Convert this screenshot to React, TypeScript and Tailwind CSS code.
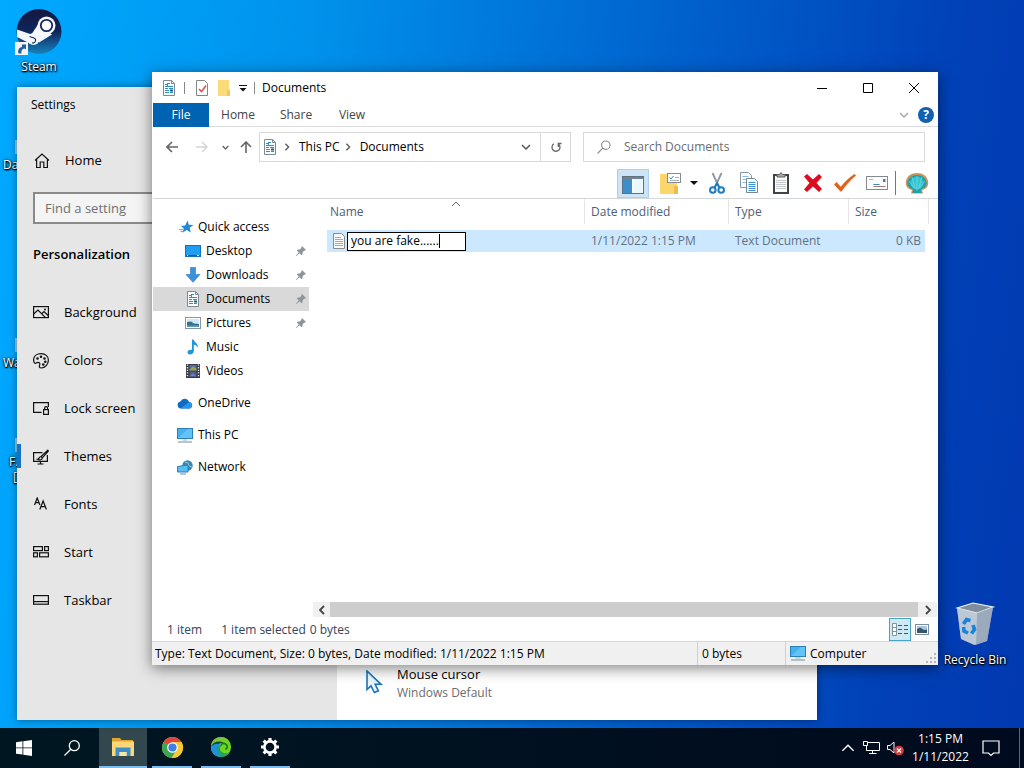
import type { ReactNode } from "react";

const DocIcon = ({ className = "" }: { className?: string }) => (
  <svg viewBox="0 0 14 16" className={`h-4 w-3.5 shrink-0 ${className}`} aria-hidden="true">
    <path d="M1.5.5h8l3 3v12h-11z" fill="#fafdff" stroke="#7d8a93" />
    <path d="M9.500.5v3h3" fill="none" stroke="#7d8a93" />
    <path d="M3 4.500h2M6 3.500h2M3 6.500h8M3 8.500h3M7 8.500h4M3 10.500h4M3 12.500h4M8 12.500h3" stroke="#2f8fcb" />
    <path d="M8 10.500h3" stroke="#1d5f77" strokeWidth="2" />
    <path d="M5.500 3v4" stroke="#2f8fcb" />
  </svg>
);

const PinIcon = () => (
  <svg viewBox="0 0 10 10" className="size-2.5 shrink-0" aria-hidden="true">
    <path d="M6 0l4 4-1 .8-.7-.3-1.800 2 .1 1.800-1 .9-2-2L.4 10 0 9.600l2.800-3.200-2-2 .9-1 1.900.1 2-1.800L5.200.9z" fill="#8c959c" />
  </svg>
);

const Monitor = () => (
  <svg viewBox="0 0 16 15" className="h-[15px] w-4 shrink-0" aria-hidden="true">
    <rect x=".5" y=".5" width="15" height="10" fill="#45b0ee" stroke="#2b7fb5" />
    <path d="M1 10L11 1h4v9z" fill="#64c3f6" />
    <path d="M5.500 12h5" stroke="#9fb4c2" />
    <path d="M1 14h14" stroke="#6f8ea3" />
  </svg>
);

const PictureIcon = () => (
  <svg viewBox="0 0 16 12" className="h-3 w-4 shrink-0" aria-hidden="true">
    <rect x=".5" y=".5" width="15" height="11" fill="#fff" stroke="#8a97a0" />
    <rect x="2" y="2" width="12" height="8" fill="#cfe8f5" />
    <path d="M2 5l4-.5 3 2 5 .5v3H2z" fill="#3c6e87" />
    <path d="M2 8.500h12V10H2z" fill="#5d9fc4" />
  </svg>
);

const Chevron = ({ d, size, color, w = "1.300" }: { d: string; size: string; color: string; w?: string }) => (
  <svg viewBox="0 0 10 10" className={`${size} shrink-0`} fill="none" stroke={color} strokeWidth={w} aria-hidden="true">
    <path d={d} />
  </svg>
);

const DOWN = "M1 3l4 4 4-4";
const RIGHT = "M3 1l4 4-4 4";
const LEFT = "M7 1L3 5l4 4";
const UP = "M1 7l4-4 4 4";

/* ---------- Settings window ---------- */

const line = { fill: "none", stroke: "#111", strokeWidth: 1.2 };

const settingsItems: { label: string; icon: ReactNode }[] = [
  {
    label: "Background",
    icon: (
      <>
        <rect x=".6" y="1.600" width="14.800" height="11" />
        <path d="M.6 9l4.400-4 7.500 7.600M9 8.500l2-2 4.400 4.300" />
        <circle cx="12" cy="4.500" r=".4" />
      </>
    ),
  },
  {
    label: "Colors",
    icon: (
      <>
        <path d="M.6 6.500C.8 2.900 4 .6 8.200.6c4 0 7.200 2.600 7.200 6.300 0 4.500-3.200 8.100-7.200 8.100-1.600 0-2.400-1.300-1.600-2.700.8-1.400 0-2.900-1.600-2.900-1.600 0-1.700.9-2.900.9C1.100 10.300.6 8.100.6 6.500z" />
        <circle cx="4.500" cy="5.500" r=".7" />
        <circle cx="8" cy="3.800" r=".7" />
        <circle cx="11.500" cy="5.500" r=".7" />
        <circle cx="12.300" cy="8.800" r=".7" />
        <circle cx="10.300" cy="11.500" r=".7" />
      </>
    ),
  },
  {
    label: "Lock screen",
    icon: (
      <>
        <path d="M15.400 6V1.600H.6v9.800h8" />
        <rect x="10.600" y="8.600" width="4.800" height="4.800" />
        <path d="M11.600 8.500V7.200a1.500 1.500 0 013 0v1.300" />
      </>
    ),
  },
  {
    label: "Themes",
    icon: (
      <>
        <path d="M9.500 3.600H.6v8.800h13.800V6M7.500 12.400V15M4.500 15h6" />
        <path d="M14.800 1.200L8 7.500l1.300 1.400 6-6.800zM8 7.500c-2 0-1.500 2.500-3.500 2.800 2 1 4.800.6 4.800-1.400" />
      </>
    ),
  },
  {
    label: "Fonts",
    icon: <path d="M1.500 8l2.700-7 2.700 7M2.500 5.700h3.600M6.800 12.500l3.300-8.500 3.300 8.500M8 9.700h4.300" />,
  },
  {
    label: "Start",
    icon: (
      <>
        <rect x=".6" y="1.600" width="8.800" height="4" />
        <rect x="11.600" y="1.600" width="3.800" height="4" />
        <rect x=".6" y="7.800" width="3.800" height="4" />
        <rect x="6.600" y="7.800" width="8.800" height="4" />
      </>
    ),
  },
  {
    label: "Taskbar",
    icon: (
      <>
        <rect x=".6" y="2.600" width="14.800" height="8.600" />
        <path d="M.6 8.600h14.800" />
      </>
    ),
  },
];

function SettingsWindow() {
  return (
    <section
      aria-label="Settings"
      className="absolute top-[87px] bottom-2 left-[17px] flex w-[800px] bg-white shadow-[0_0_8px_rgba(0,0,0,0.4)]"
    >
      <div className="flex w-80 flex-col bg-[#e6e6e6] text-[13px] text-black">
        <h2 className="px-3.5 pt-2 text-xs leading-5">Settings</h2>
        <a href="#home" className="mt-[22px] flex h-12 items-center gap-[15px] pl-[17px]">
          <svg viewBox="0 0 16 16" className="size-4" {...line} aria-hidden="true">
            <path d="M1 7.500l7-6.500 7 6.500M2.600 6.200v8.300h3.600V9h3.600v5.500h3.600V6.200" />
          </svg>
          Home
        </a>
        <input
          aria-label="Find a setting"
          placeholder="Find a setting"
          className="mx-4 mt-[7px] h-8 border-2 border-[#8a8a8a] bg-[#f4f4f4] px-2.5 placeholder:text-[#717171]"
        />
        <h3 className="mt-5 pl-4 text-[13px] leading-5 font-semibold">Personalization</h3>
        <nav className="mt-[25px] flex flex-col">
          {settingsItems.map((i) => (
            <a key={i.label} href={`#${i.label}`} className="flex h-12 items-center gap-[15px] pl-4">
              <svg viewBox="0 0 16 16" className="size-4 shrink-0" {...line} aria-hidden="true">
                {i.icon}
              </svg>
              {i.label}
            </a>
          ))}
        </nav>
      </div>
      <div className="flex flex-1 items-end px-7 pb-[18px]">
        <svg viewBox="0 0 18 24" className="mb-2 h-6 w-[18px]" aria-hidden="true">
          <path d="M2 1v18.500l4-3.700 3.400 6.700 4-1.700-3.200-6.500h5.800z" fill="#eaf6ff" stroke="#1b74bb" strokeWidth="1.600" />
        </svg>
        <div className="ml-3.5">
          <p className="text-[13px] leading-5 text-black">Mouse cursor</p>
          <p className="text-xs leading-[18px] text-[#6d6d6d]">Windows Default</p>
        </div>
      </div>
    </section>
  );
}

/* ---------- Explorer window ---------- */

const quickItems: { label: string; pinned?: boolean; active?: boolean; icon: ReactNode }[] = [
  {
    label: "Desktop",
    pinned: true,
    icon: (
      <svg viewBox="0 0 16 12" className="h-3 w-4" aria-hidden="true">
        <rect x=".5" y=".5" width="15" height="11" fill="#1e9df1" stroke="#1474b8" />
        <path d="M1 10.500h14" stroke="#0b5c98" />
        <path d="M2 10.500h1M12 10.500h2" stroke="#fff" />
      </svg>
    ),
  },
  {
    label: "Downloads",
    pinned: true,
    icon: (
      <svg viewBox="0 0 16 16" className="size-4" aria-hidden="true">
        <path d="M5.500.5h5v7h4.500L8 15.300 1 7.500h4.500z" fill="#3b91dc" stroke="#2a78bf" strokeWidth=".6" />
      </svg>
    ),
  },
  { label: "Documents", pinned: true, active: true, icon: <DocIcon /> },
  { label: "Pictures", pinned: true, icon: <PictureIcon /> },
  {
    label: "Music",
    icon: (
      <svg viewBox="0 0 16 16" className="size-4" aria-hidden="true">
        <path d="M7 .5h1.500c.5 2.500 4.800 3.300 4.300 8.500-.6-2-2-3-4-3.300v6.600c0 2-1.800 3.200-3.700 3.200S2.500 14.500 2.500 13 4 10.400 7 10.700z" fill="#1e96dc" />
      </svg>
    ),
  },
  {
    label: "Videos",
    icon: (
      <svg viewBox="0 0 16 16" className="size-4" aria-hidden="true">
        <rect x="1" y="1" width="14" height="14" fill="#39393f" />
        <path d="M2.500 1.500v13M13.500 1.500v13" stroke="#e6e6e6" strokeWidth="1.400" strokeDasharray="1.300 1.300" />
        <rect x="4.500" y="2" width="7" height="5.500" fill="#5a6ea6" />
        <rect x="4.500" y="8.500" width="7" height="5.500" fill="#4a5c90" />
        <path d="M4.500 6.500l3.500-3 3.500 2v2h-7z" fill="#93a746" />
        <path d="M5 13l3-3 3 3z" fill="#7b76b8" />
      </svg>
    ),
  },
];

const rootItems: { label: string; icon: ReactNode }[] = [
  {
    label: "OneDrive",
    icon: (
      <svg viewBox="0 0 16 11" className="h-[11px] w-4" aria-hidden="true">
        <path d="M4 10.500a3.600 3.600 0 01-.6-7.100A4.600 4.600 0 0112 3.900a3.400 3.400 0 01.9 6.600z" fill="#0f6cc4" />
        <path d="M3.500 10.500L12 4.200a3.300 3.300 0 011 6.300z" fill="#2795ea" />
      </svg>
    ),
  },
  { label: "This PC", icon: <Monitor /> },
  {
    label: "Network",
    icon: (
      <svg viewBox="0 0 16 15" className="h-[15px] w-4" aria-hidden="true">
        <circle cx="10.500" cy="5.500" r="5.200" fill="#3f86ad" />
        <path d="M8 2l3 1 1 3 3 1" stroke="#8cc7e4" fill="none" />
        <path d="M.5 6.500l10.500-1.500v7H.5z" fill="#58bdf0" stroke="#2b7fb5" />
        <path d="M3 14h6" stroke="#6f8ea3" />
      </svg>
    ),
  },
];

const tools: { label: string; icon: ReactNode }[] = [
  {
    label: "Cut",
    icon: (
      <>
        <path d="M7.500 2l6 13M16.500 2l-6 13" stroke="#8d979f" strokeWidth="1.800" />
        <circle cx="7.800" cy="19" r="2.800" fill="none" stroke="#1b7cc4" strokeWidth="2" />
        <circle cx="16.200" cy="19" r="2.800" fill="none" stroke="#1b7cc4" strokeWidth="2" />
        <path d="M9.500 16.500l2.500-4 2.500 4" fill="none" stroke="#1b7cc4" strokeWidth="2" />
      </>
    ),
  },
  {
    label: "Copy",
    icon: (
      <>
        <path d="M3.500 1.500h8l3 3v12h-11z" fill="#fff" stroke="#8297a8" />
        <path d="M5.500 5.500h6M5.500 8.500h6M5.500 11.500h6" stroke="#88b9df" />
        <path d="M9.500 7.500h8l3 3v11h-11z" fill="#fff" stroke="#71889a" />
        <path d="M11.500 11.500h7M11.500 13.500h7M11.500 15.500h7M11.500 17.500h7M11.500 19.500h7" stroke="#3f94d3" />
      </>
    ),
  },
  {
    label: "Paste",
    icon: (
      <>
        <rect x="5" y="4" width="14" height="18" fill="#fafafa" stroke="#404449" strokeWidth="2" />
        <path d="M8 6V3.500h2.500l1.500-2 1.500 2H16V6z" fill="#a7abae" stroke="#5a5e62" />
        <path d="M7 9.500h10M7 11.500h10M7 13.500h10M7 15.500h10M7 17.500h10" stroke="#c5c9cd" />
      </>
    ),
  },
  {
    label: "Delete",
    icon: <path d="M3 5.500L6 3l6 5.500L18 3l3 3-5.500 6 5.500 6-3 3-6-5.500L6 21l-3-2.500L8.500 12z" fill="#dd0a20" />,
  },
  {
    label: "Properties",
    icon: <path d="M1 13.500L3.500 11l4.300 4.700C12 10.500 16 6.500 21.500 3l1.500 1.500C17 9.500 12.500 14.500 8.500 20.500H7.500z" fill="#e2611b" />,
  },
  {
    label: "Rename",
    icon: (
      <>
        <rect x="1.500" y="5.500" width="21" height="13" fill="#fbfcfd" stroke="#83898e" />
        <rect x="18" y="8" width="2.500" height="3" fill="#4f78c7" />
        <path d="M4 8.500h4" stroke="#b5bbc0" />
        <path d="M8.500 13.500h6" stroke="#4b82b0" />
        <path d="M8.500 15.500h12" stroke="#a07980" />
      </>
    ),
  },
];

function Sidebar() {
  return (
    <nav className="flex w-[160px] shrink-0 flex-col pt-4 text-black">
      <a href="#quick" className="flex h-6 items-center gap-1 pl-[25px]">
        <svg viewBox="0 0 16 16" className="size-4" aria-hidden="true">
          <path d="M9.500 1.500l1.300 4.200 4.700.3-3.800 2.800 1 4.700-4-2.500-4.200 2.800 1.300-4.300-2.800-2.500 4.200-.6z" fill="#2588d6" />
          <path d="M1 10.500h4M2.500 12.500h3" stroke="#5fb0ea" />
        </svg>
        Quick access
      </a>
      {quickItems.map((i) => (
        <a
          key={i.label}
          href={`#${i.label}`}
          className={`mr-1 flex h-6 items-center gap-[5px] pr-[3px] pl-8 ${i.active ? "bg-[#d9d9d9]" : ""}`}
        >
          <span className="flex w-4 justify-center">{i.icon}</span>
          <span className="flex-1">{i.label}</span>
          {i.pinned && <PinIcon />}
        </a>
      ))}
      {rootItems.map((i) => (
        <a key={i.label} href={`#${i.label}`} className="mt-2 flex h-6 items-center gap-[5px] pl-6">
          {i.icon}
          {i.label}
        </a>
      ))}
    </nav>
  );
}

function FileTable() {
  const th = "relative h-[25px] border-r border-[#e5e5e5] p-0 text-left font-normal text-[#4c607a]";
  return (
    <table className="mr-[9px] ml-[14px] table-fixed border-separate border-spacing-0">
      <colgroup>
        <col />
        <col className="w-36" />
        <col className="w-[120px]" />
        <col className="w-20" />
      </colgroup>
      <thead>
        <tr>
          <th className={`${th} pl-[3px]`}>
            Name
            <span className="absolute inset-x-0 top-0 flex justify-center">
              <Chevron d={UP} size="size-2.5" color="#666" w="1" />
            </span>
          </th>
          <th className={`${th} pl-1.5`}>Date modified</th>
          <th className={`${th} pl-1.5`}>Type</th>
          <th className={`${th} pl-1.5`}>Size</th>
        </tr>
        <tr aria-hidden="true">
          <td className="h-1.5" colSpan={4} />
        </tr>
      </thead>
      <tbody>
        <tr className="h-[22px] text-[#5f7285]">
          <td className="bg-[#cce8ff] p-0 pl-[5px]">
            <div className="flex items-center gap-px">
              <svg viewBox="0 0 14 16" className="h-4 w-3.5" aria-hidden="true">
                <path d="M1.500.5h8l3 3v12h-11z" fill="#fafafa" stroke="#8c8c8c" />
                <path d="M3 4.500h6M3 6.500h8M3 8.500h8M3 10.500h8M3 12.500h8" stroke="#a8a8a8" />
              </svg>
              <label className="flex h-[19px] w-[119px] items-center border border-black bg-white pl-[3px] text-black">
                <input
                  aria-label="File name"
                  defaultValue="you are fake......"
                  className="[field-sizing:content] bg-transparent outline-none"
                />
                <span className="h-3.5 w-px bg-black" />
              </label>
            </div>
          </td>
          <td className="bg-[#cce8ff] p-0 pl-1.5">1/11/2022 1:15 PM</td>
          <td className="bg-[#cce8ff] p-0 pl-1.5">Text Document</td>
          <td className="border-r-4 border-white bg-[#cce8ff] p-0 pr-1 text-right">0 KB</td>
        </tr>
      </tbody>
    </table>
  );
}

function ExplorerWindow() {
  return (
    <section
      aria-label="Documents"
      className="absolute top-[72px] right-[86px] bottom-[63px] left-[152px] flex flex-col bg-white pl-px text-xs shadow-[0_3px_14px_rgba(0,0,0,0.5)]"
    >
      <header className="flex h-[31px] shrink-0 items-center text-black">
        <DocIcon className="ml-[9px]" />
        <span className="ml-2 h-3 w-px bg-[#888]" />
        <button aria-label="Properties" className="ml-2.5">
          <svg viewBox="0 0 14 16" className="h-4 w-3.5" aria-hidden="true">
            <path d="M1.500.5h8l3 3v12h-11z" fill="#fff" stroke="#858585" />
            <path d="M4 9l2.500 2.500L11 5.500" fill="none" stroke="#e0504a" strokeWidth="1.500" />
          </svg>
        </button>
        <button aria-label="New folder" className="ml-2">
          <svg viewBox="0 0 14 16" className="h-4 w-3.5" aria-hidden="true">
            <path d="M1 0h11v10l1 1v5H1z" fill="#fbdb78" />
            <path d="M10 10h3v6h-3z" fill="#efc75c" />
          </svg>
        </button>
        <button aria-label="Customize Quick Access Toolbar" className="ml-2">
          <svg viewBox="0 0 8 8" className="size-2" aria-hidden="true">
            <path d="M0 1.500h8" stroke="#111" />
            <path d="M.5 4h7L4 7.500z" fill="#111" />
          </svg>
        </button>
        <span className="ml-[7px] h-3 w-px bg-[#888]" />
        <h1 className="ml-[7px] flex-1">Documents</h1>
        <button aria-label="Minimize" className="flex h-full w-[46px] items-center justify-center">
          <svg viewBox="0 0 10 10" className="size-2.5" stroke="#000"><path d="M0 5.500h10" /></svg>
        </button>
        <button aria-label="Maximize" className="flex h-full w-[46px] items-center justify-center">
          <svg viewBox="0 0 10 10" className="size-2.5" fill="none" stroke="#000"><path d="M.5.5h9v9h-9z" /></svg>
        </button>
        <button aria-label="Close" className="mr-px flex h-full w-[46px] items-center justify-center">
          <svg viewBox="0 0 10 10" className="size-2.5" stroke="#000"><path d="M0 0l10 10M10 0L0 10" /></svg>
        </button>
      </header>

      <div className="flex h-6 shrink-0 items-stretch border-b border-[#dadbdc] text-[#444]">
        <button className="-mb-px w-14 bg-[#0063b1] text-white">File</button>
        <button className="w-[58px]">Home</button>
        <button className="w-[58px]">Share</button>
        <button className="w-[54px]">View</button>
        <span className="flex-1" />
        <button aria-label="Expand the Ribbon" className="mr-[9px]">
          <Chevron d={DOWN} size="size-2.5" color="#aaa" w="1.500" />
        </button>
        <button
          aria-label="Help"
          className="mr-1 size-4 self-center rounded-full bg-[#0f62b0] text-xs leading-4 font-bold text-white"
        >
          ?
        </button>
      </div>

      <div className="flex h-10 shrink-0 items-center pr-[13px] text-black">
        <button aria-label="Back" className="ml-[13px]">
          <svg viewBox="0 0 12 12" className="size-3" fill="none" stroke="#666" strokeWidth="1.600"><path d="M12 6H1M6 1L1 6l5 5" /></svg>
        </button>
        <button aria-label="Forward" className="ml-[18px]">
          <svg viewBox="0 0 12 12" className="size-3" fill="none" stroke="#d5d5d5" strokeWidth="1.500"><path d="M0 6h11M6 1l5 5-5 5" /></svg>
        </button>
        <button aria-label="Recent locations" className="ml-[14px]">
          <Chevron d={DOWN} size="size-[7px]" color="#666" w="2" />
        </button>
        <button aria-label="Up" className="ml-[11px]">
          <svg viewBox="0 0 12 12" className="size-3" fill="none" stroke="#666" strokeWidth="1.600"><path d="M6 12V1M1 6l5-5 5 5" /></svg>
        </button>
        <div className="ml-[7px] flex h-[30px] flex-1 items-center border border-[#d9d9d9]">
          <DocIcon className="ml-[3px]" />
          <span className="ml-[6px] flex"><Chevron d={RIGHT} size="size-2" color="#555" w="1.600" /></span>
          <button className="ml-2">This PC</button>
          <span className="ml-1 flex"><Chevron d={RIGHT} size="size-2" color="#555" w="1.600" /></span>
          <button className="ml-2">Documents</button>
          <span className="flex-1" />
          <button aria-label="Previous locations" className="mr-[9px]">
            <Chevron d={DOWN} size="size-2.5" color="#555" w="1.500" />
          </button>
          <button aria-label="Refresh" className="flex h-full w-[30px] items-center justify-center border-l border-[#d9d9d9]">
            <svg viewBox="0 0 12 12" className="size-3" fill="none" stroke="#666" strokeWidth="1.300">
              <path d="M8.300 3A4 4 0 114 2.800M8.300 6V2.500H11.500" />
            </svg>
          </button>
        </div>
        <label className="ml-3 flex h-[30px] w-[342px] items-center border border-[#d9d9d9] pl-[13px]">
          <svg viewBox="0 0 14 14" className="size-3.5" fill="none" stroke="#8a8a8a" strokeWidth="1.100" aria-hidden="true">
            <circle cx="8.800" cy="5.200" r="4.200" />
            <path d="M5.800 8.200L.5 13.500" />
          </svg>
          <input
            aria-label="Search Documents"
            placeholder="Search Documents"
            className="ml-[13px] min-w-0 flex-1 outline-none placeholder:text-[#6d6d6d]"
          />
        </label>
      </div>

      <div className="flex h-8 shrink-0 items-center justify-end border-b border-[#d5d8da] pr-[9px]">
        <button aria-label="Navigation pane" className="flex h-[29px] w-8 items-center justify-center self-end border border-[#a9d3ee] bg-[#cce4f5]">
          <svg viewBox="0 0 22 18" className="mt-0.5 h-[18px] w-[22px]" aria-hidden="true">
            <rect x=".5" y=".5" width="21" height="17" fill="#fff" stroke="#5f7280" />
            <path d="M1 2h20" stroke="#73828d" strokeWidth="2" />
            <path d="M1 3h9v14H1z" fill="#3c8fcc" />
            <path d="M11.500 3h9v14h-9z" fill="#eaf7ff" />
          </svg>
        </button>
        <button aria-label="Options" className="ml-2.5 flex items-center gap-[9px]">
          <svg viewBox="0 0 22 24" className="h-6 w-[22px]" aria-hidden="true">
            <path d="M1 3h7l2 2h8v18H1z" fill="#fbd66d" />
            <path d="M15 15h4v8h-4z" fill="#edbc4c" />
            <rect x="8.500" y="2.500" width="13" height="9" fill="#fff" stroke="#858b90" />
            <path d="M10.500 6.500l1.500 1.500 2.500-3" stroke="#3586c8" fill="none" />
            <path d="M16 6.500h4M11 9.500h9" stroke="#aeb5ba" />
          </svg>
          <svg viewBox="0 0 8 4" className="h-1 w-2" aria-hidden="true"><path d="M0 0h8L4 4z" fill="#111" /></svg>
        </button>
        <div className="ml-[3px] flex items-center">
          {tools.map((t) => (
            <button key={t.label} aria-label={t.label} className="flex w-8 justify-center">
              <svg viewBox="0 0 24 24" className="size-6" aria-hidden="true">{t.icon}</svg>
            </button>
          ))}
        </div>
        <span className="ml-0.5 h-6 w-px bg-[#777]" />
        <button aria-label="Classic Shell" className="ml-[9px]">
          <svg viewBox="0 0 24 24" className="size-6" aria-hidden="true">
            <path d="M6 22.500l1-3.500C2 18 0 14 1 10c1-5 5-8 11-8s10 3 11 8c1 4-1 8-6 9l1 3.500z" fill="#c99455" />
            <path d="M7.500 22l1-3.500C4 17.500 2 14 2.500 11 3.500 7 7 4 12 4s8.500 3 9.500 7c.5 3-1.500 6.500-6 7.500l1 3.500z" fill="#1f9fb0" />
            <circle cx="12" cy="12" r="6.500" fill="#35c4d2" />
            <path d="M12 20V5M10.500 18L7 6M13.500 18L17 6M9.500 17L4 10M14.500 17L20 10" stroke="#6fdbe0" strokeWidth=".8" />
          </svg>
        </button>
      </div>

      <div className="flex min-h-0 flex-1">
        <Sidebar />
        <main className="flex min-w-0 flex-1 flex-col">
          <div className="grid flex-1 content-start">
            <FileTable />
          </div>
          <div className="mr-px flex h-[15px] shrink-0 items-center bg-[#f0f0f0]">
            <button aria-label="Scroll left" className="flex w-[17px] justify-center"><Chevron d={LEFT} size="size-2.5" color="#444" w="1.800" /></button>
            <div className="h-full flex-1 bg-[#cdcdcd]" />
            <button aria-label="Scroll right" className="flex w-[19px] justify-center"><Chevron d={RIGHT} size="size-2.5" color="#444" w="1.800" /></button>
          </div>
        </main>
      </div>

      <div className="flex h-6 shrink-0 items-center pr-[9px] pl-3.5 text-[#33435e]">
        <span className="pt-px">1 item</span>
        <span className="ml-[19px] pt-px">1 item selected</span>
        <span className="ml-1 pt-px">0 bytes</span>
        <span className="flex-1" />
        <button aria-label="Details view" className="flex h-[23px] w-[22px] items-center justify-center border border-[#4aa5c4] bg-[#cdeaf4]">
          <svg viewBox="0 0 16 13" className="h-[13px] w-4" fill="none" aria-hidden="true">
            <path d="M.5.5h4v12h-4zM.5 4.500h4M.5 8.500h4" fill="#fff" stroke="#8194a0" />
            <path d="M6 2.500h4M12 2.500h4M6 6.500h4M12 6.500h4M6 10.500h4M12 10.500h4" stroke="#4a5560" />
          </svg>
        </button>
        <button aria-label="Large icons view" className="ml-1 flex">
          <svg viewBox="0 0 14 11" className="h-[11px] w-3.5" aria-hidden="true">
            <rect x=".5" y=".5" width="13" height="10" fill="#fff" stroke="#7e8e9e" />
            <rect x="2" y="2" width="10" height="7" fill="#a9c8dd" />
            <path d="M2 5l3-1.500L9 6l3-.5V9H2z" fill="#34566e" />
          </svg>
        </button>
      </div>

      <footer className="-ml-px flex h-6 shrink-0 items-center border-t border-[#d7d7d7] bg-[#f0f0f0] text-black">
        <span className="flex-1 truncate pl-[3px]">Type: Text Document, Size: 0 bytes, Date modified: 1/11/2022 1:15 PM</span>
        <span className="flex h-full w-[88px] items-center border-l border-[#d0d0d0] pl-1">0 bytes</span>
        <span className="flex h-full w-[153px] items-center gap-1 border-l border-[#d0d0d0] pl-1">
          <Monitor />
          <span className="flex-1">Computer</span>
          <svg viewBox="0 0 10 10" className="mr-0.5 mb-0.5 size-2.5 self-end" fill="#b5b5b5" aria-hidden="true">
            <path d="M8 0h2v2H8zM4 4h2v2H4zM8 4h2v2H8zM0 8h2v2H0zM4 8h2v2H4zM8 8h2v2H8z" />
          </svg>
        </span>
      </footer>
    </section>
  );
}

/* ---------- Desktop ---------- */

const labelShadow = "[text-shadow:0_1px_1px_#000,1px_1px_2px_#000,0_0_3px_#000]";

const edgeIcons = [
  { name: "Da", top: "top-[140px]", text: "top-[155px] left-[3px]" },
  { name: "Wa", top: "top-[338px]", text: "top-[353px] left-[3px]" },
  { name: "F.", top: "top-[438px]", text: "top-[452px] left-[9px]" },
];

function DesktopIcons() {
  return (
    <>
      <button className="absolute top-2 left-1 flex w-[70px] flex-col items-center">
        <span className="relative">
          <svg viewBox="0 0 48 48" className="size-12" aria-hidden="true">
            <defs>
              <linearGradient id="steam" x1="0" y1="0" x2="0" y2="1">
                <stop offset="0" stopColor="#14183f" />
                <stop offset=".5" stopColor="#10255c" />
                <stop offset="1" stopColor="#1783bd" />
              </linearGradient>
            </defs>
            <circle cx="24" cy="23.500" r="22.500" fill="url(#steam)" />
            <path d="M2 21.500v7.500l14 7 6-7-4-2z" fill="#f5f7fa" />
            <path d="M17 25.500l6-9 14 10-13 8z" fill="#f5f7fa" />
            <circle cx="31.500" cy="17.500" r="9" fill="#f5f7fa" />
            <circle cx="31.500" cy="17.500" r="5.700" fill="#fff" stroke="#18295e" strokeWidth="1.800" />
            <circle cx="18.500" cy="31" r="6" fill="#f5f7fa" />
            <path d="M14.500 28.500l4.500 1.500a2.500 2.500 0 11-2 4.700" fill="none" stroke="#18295e" strokeWidth="1.100" />
          </svg>
          <svg viewBox="0 0 13 13" className="absolute bottom-px left-0 size-[13px]" aria-hidden="true">
            <rect width="13" height="13" fill="#f4f4f4" />
            <path d="M3.500 11.500C2.500 8 4 5.500 7 5V2.500h4v5L9.500 6.500C7 7 6 8.500 6.500 11.500z" fill="#1f5fa3" />
          </svg>
        </span>
        <span className={`mt-px text-xs leading-5 text-white ${labelShadow}`}>Steam</span>
      </button>
      {edgeIcons.map((e) => (
        <div key={e.name}>
          <span className={`absolute left-[15px] h-3.5 w-4 bg-[#8fc6ea] ${e.top}`} />
          <span className={`absolute text-xs leading-5 text-white ${e.text} ${labelShadow}`}>{e.name}</span>
        </div>
      ))}
      <span className={`absolute top-[467px] left-[13px] text-xs leading-5 text-white ${labelShadow}`}>[</span>
      <button className="absolute right-2.5 bottom-[58px] flex w-[78px] flex-col items-center">
        <svg viewBox="0 0 40 44" className="h-11 w-10" aria-hidden="true">
          <path d="M2 6l16-5 20 4-6 34-13 4-13-6z" fill="#c3cdd9" fillOpacity=".85" />
          <path d="M2 6l16-5 20 4-16 6z" fill="#7f8e9f" stroke="#eef3f7" strokeWidth="1.200" />
          <path d="M22 11l16-6-6 34-11 4z" fill="#98a6b6" fillOpacity=".8" />
          <path d="M2 6l20 5-1 32-15-6z" fill="#c3ccd6" fillOpacity=".8" />
          <g fill="none" stroke="#1683dd" strokeWidth="3.600">
            <path d="M8.500 22l3-4.500 4 1" />
            <path d="M18 23l1.500 4.500-3 4" />
            <path d="M13 31l-4-2-.5-4" />
          </g>
        </svg>
        <span className={`mt-1 text-xs leading-5 whitespace-nowrap text-white ${labelShadow}`}>Recycle Bin</span>
      </button>
    </>
  );
}

/* ---------- Taskbar ---------- */

function AppButton({ label, active = false, children }: { label: string; active?: boolean; children: ReactNode }) {
  return (
    <button
      aria-label={label}
      className={`ml-px flex h-full w-12 flex-col items-center ${active ? "bg-[#33474f]" : ""}`}
    >
      <span className="flex flex-1 items-center">{children}</span>
      <span className={`h-0.5 bg-[#7cbdf0] ${active ? "w-full" : "w-10"}`} />
    </button>
  );
}

function Taskbar() {
  return (
    <footer className="flex h-10 shrink-0 items-center bg-linear-to-r from-[#001722] to-[#000a1e] text-white">
      <button aria-label="Start" className="flex h-full w-12 items-center justify-center">
        <svg viewBox="0 0 16 16" className="size-4" fill="#fff"><path d="M0 2.200L6.500 1.300v6.200H0zM7.300 1.200L16 0v7.500H7.300zM0 8.300h6.500v6.300L0 13.700zM7.300 8.300H16V16l-8.700-1.200z" /></svg>
      </button>
      <button aria-label="Search" className="mr-0.5 flex h-full w-12 items-center justify-center">
        <svg viewBox="0 0 16 16" className="size-4" fill="none" stroke="#fff" strokeWidth="1.300"><circle cx="10.300" cy="5.700" r="5" /><path d="M6.800 9.200L.5 15.500" /></svg>
      </button>
      <AppButton label="File Explorer" active>
        <svg viewBox="0 0 22 18" className="h-[18px] w-[22px]">
          <path d="M0 0h8l1.500 2H21v3H0z" fill="#e0a52f" />
          <path d="M0 3.500h22V18H0z" fill="#fbd877" />
          <path d="M3.500 9.500h15V18h-4v-4h-7v4h-4z" fill="#3c8dcb" />
          <path d="M7.500 14h7v4h-7z" fill="#f8e4a4" />
        </svg>
      </AppButton>
      <AppButton label="Google Chrome">
        <svg viewBox="0 0 24 24" className="size-[23px]">
          <circle cx="12" cy="12" r="11" fill="#fbc82d" />
          <path d="M12 12L2.500 6.500A11 11 0 0121.500 6.500H12z" fill="#e0453a" />
          <path d="M2.500 6.500A11 11 0 0011 23l5.500-8.500L12 12z" fill="#3aa655" />
          <path d="M12 6.500h9.500A11 11 0 0111 23l5.800-9z" fill="#fbc82d" />
          <circle cx="12" cy="12" r="5.600" fill="#fff" />
          <circle cx="12" cy="12" r="4.300" fill="#3f7fe6" />
        </svg>
      </AppButton>
      <AppButton label="Edge">
        <svg viewBox="0 0 24 24" className="size-[22px]">
          <circle cx="12" cy="12" r="11" fill="#6fd41c" />
          <path d="M1 12C1.500 5 6 1 12 1c4 0 6.500 1.500 8 3.500-3-1.500-6-1-8 .5C8 5 3.500 8 1 12z" fill="#7ec43a" />
          <path d="M1.200 11C4 6 9 4.500 15.500 7.500 10 7.500 6 9 4.500 13z" fill="#17453c" />
          <path d="M1 12.500C3.500 8.500 7 7.500 11 9c-4 2.500-4.500 9 1.500 13.900C6 23.300 1 18.500 1 12.500z" fill="#1f8fe0" />
          <path d="M8.500 10.500c-2.500 5 0 10.500 4.500 12.400 3.800-.3 7-2 8.800-5.400-3 2-7 2-9.500-.5-1.800-2-2-4.500 0-6.500-1-.7-2.500-.7-3.800 0z" fill="#1fa06c" />
          <path d="M12 10.500c0-2.500 4-3.500 6-1 1.500 2 1 4.500-1.500 5" fill="none" stroke="#187a32" strokeWidth="1.800" />
        </svg>
      </AppButton>
      <AppButton label="Settings">
        <svg viewBox="0 0 20 20" className="size-5" fill="none" stroke="#fff">
          <circle cx="10" cy="10" r="5.600" strokeWidth="2.600" />
          <g strokeWidth="3.200">
            <path d="M10 1v3M10 16v3M1 10h3M16 10h3M3.600 3.600l2.100 2.100M14.300 14.300l2.100 2.100M3.600 16.400l2.100-2.100M14.300 5.700l2.100-2.100" />
          </g>
        </svg>
      </AppButton>
      <span className="flex-1" />
      <button aria-label="Show hidden icons" className="flex"><Chevron d={UP} size="size-[14px]" color="#fff" w="1" /></button>
      <svg viewBox="0 0 17 14" className="ml-2 h-3.5 w-[17px]" fill="none" stroke="#fff" role="img" aria-label="Network">
        <path d="M5 1.500h11.500v8H3.500V5M9.500 9.500v3M6 12.500h7.500" />
        <path d="M.5.500h4v4h-4zM3.500 4.500v5" />
      </svg>
      <svg viewBox="0 0 18 16" className="ml-[7px] h-4 w-[18px]" fill="none" role="img" aria-label="Volume muted">
        <path d="M.5 5.500h2.500L7 2v11L3 9.500H.5z" stroke="#fff" />
        <circle cx="12" cy="10.500" r="4.800" fill="#d43d3d" />
        <path d="M10 8.500l4 4M14 8.500l-4 4" stroke="#fff" strokeWidth="1.200" />
      </svg>
      <div className="ml-[7px] w-[57px] text-center text-xs leading-[18px] whitespace-nowrap">
        <p>1:15 PM</p>
        <p>1/11/2022</p>
      </div>
      <button aria-label="Notifications" className="ml-[13px] flex">
        <svg viewBox="0 0 18 17" className="h-[17px] w-[18px]" fill="none" stroke="#fff" strokeWidth="1.200"><path d="M1 1h16v12h-5.500L9 15.500 6.500 13H1z" /></svg>
      </button>
      <button aria-label="Show desktop" className="ml-[19px] h-full w-[5px] border-l border-[#5b6675]" />
    </footer>
  );
}

export default function App() {
  return (
    <div className="flex h-screen flex-col overflow-hidden bg-[linear-gradient(97deg,#00aaff_0%,#0092ec_28%,#0060cc_62%,#0142b8_85%,#0138b0_100%)] font-['Open_Sans','Noto_Sans',sans-serif]">
      <div className="relative min-h-0 flex-1">
        <DesktopIcons />
        <SettingsWindow />
        <span className="absolute top-[444px] left-[17px] h-6 w-1 bg-[#1673c4]" />
        <ExplorerWindow />
      </div>
      <Taskbar />
    </div>
  );
}
